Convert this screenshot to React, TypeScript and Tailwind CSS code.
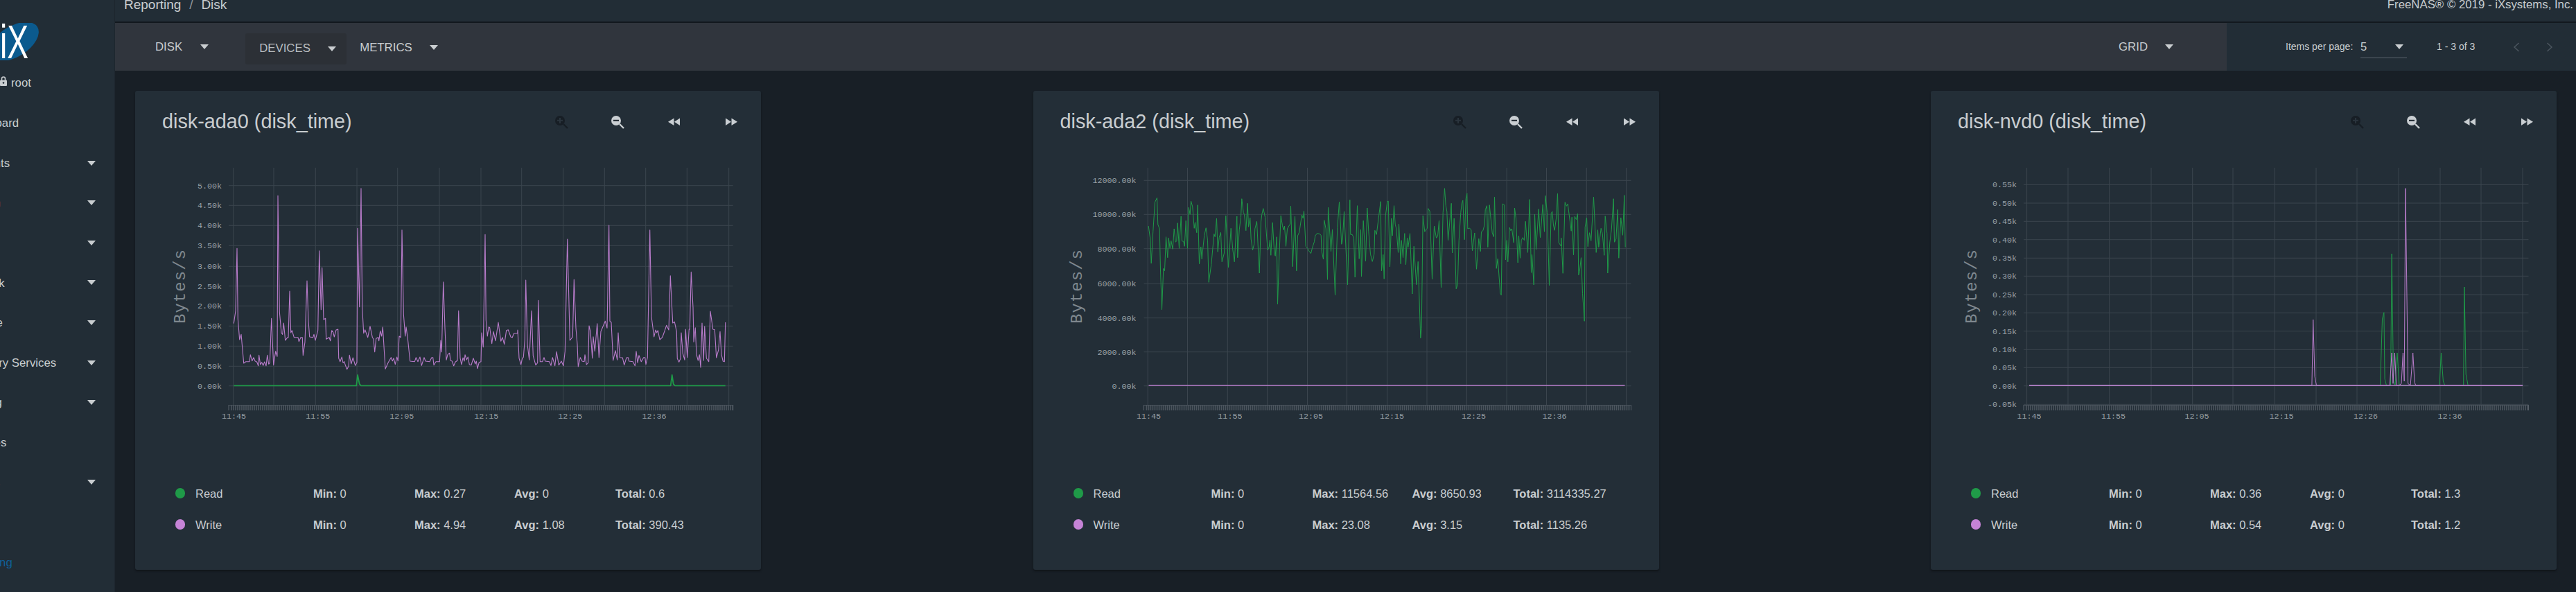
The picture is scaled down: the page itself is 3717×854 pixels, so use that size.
import React from "react";

const parse = (s: string, ox: number, oy: number, sx = 3, sy = 3) =>
  s
    .trim()
    .split(/\s+/)
    .map((p) => {
      const [x, y] = p.split(",").map(Number);
      return `${(ox + x / sx).toFixed(1)},${(oy + y / sy).toFixed(1)}`;
    })
    .join(" ");

const purple1 =
  parse(
    "322,710 330,655 336,385 340,690 347,780 354,757 365,882 374,875 390,875 394,845 401,872 408,857 414,872 422,877 428,893 431,847 437,888 443,878 449,892 455,876 462,893 467,847 473,886 478,880 485,688 494,890 503,830 510,853 513,157 520,660 528,750 533,757 538,708 545,783 555,770 558,770 564,570 569,750 574,740 583,770 600,770 604,788 612,770 619,770 622,848 630,790 639,525 645,700 650,768 665,770 669,757 675,783 686,740 692,395 700,650 704,468 711,693 719,688 722,778 735,770 740,785 746,740 752,748 757,768 765,738 773,735 776,860 782,875 790,855 795,880 800,875 805,890 812,908 819,895 823,847 830,885 838,858 848,892 855,878 858,298 866,638 873,125 878,640 884,752 890,737 902,770 912,722 922,770 927,778 932,833 938,775 947,770 950,785 956,742 962,765 967,725 978,907 990,880 1003,857 1009,872 1014,860 1021,887 1028,855 1033,872 1038,765 1045,770 1050,305 1057,670 1064,765 1068,725 1075,775 1085,873 1105,875 1111,857 1119,875 1128,855 1135,892 1146,857 1152,873 1170,875 1178,858 1184,857 1188,890 1197,875 1213,875 1218,783 1222,833 1229,530 1236,730 1242,868 1248,845 1256,838 1260,870 1267,873 1274,893 1281,877 1290,870 1295,655 1302,860 1308,888 1314,858 1320,873 1323,845 1330,867 1336,855 1342,888 1350,890",
    230,
    230
  ) +
  " " +
  parse(
    "99,860 107,885 112,873 117,905 124,878 132,875 135,750 142,812 150,325 154,695 160,765 166,725 170,728 179,797 186,745 195,785 207,705 218,787 225,770 233,800 242,740 250,737 261,768 268,770 274,754 290,752 291,738 297,860 305,888 311,860 316,856 322,780 326,522 333,800 341,868 351,655 358,850 369,890 377,880 380,610 388,875 398,875 405,857 410,873 428,875 435,892 442,857 452,893 459,832 469,890 480,873 489,893 496,830 506,345 517,783 529,768 535,520 543,730 549,800 553,897 562,857 570,873 579,875 582,845 589,888 596,880 600,720 606,745 614,860 618,767 625,830 635,710 643,857 651,745 670,700 678,730 686,285 690,700 696,705 704,870 714,827 722,868 726,750 733,857 745,858 752,890 762,858 769,857 773,873 790,875 799,893 804,830 810,880 816,848 826,875 836,857 842,857 846,887 853,857 863,305 870,680 881,768 888,738 893,750 898,740 906,780 917,770 928,740 935,718 945,738 952,503 962,708 970,703 979,745 982,862 989,877 996,862 999,750 1006,840 1014,868 1018,735 1025,857 1033,735 1036,735 1042,487 1050,640 1053,790 1060,728 1065,845 1072,870 1078,845 1083,900 1089,708 1096,870 1100,722 1108,860 1118,875 1125,657 1136,735 1144,737 1151,858 1160,825 1167,745 1173,845 1180,873 1186,875 1190,705",
    650,
    230
  );

const green1 =
  "337.3,556.3 " +
  parse("853,979 858,933 866,972 873,979", 230, 230) +
  " " +
  parse("953,979 959,933 965,972 972,979 1190,979", 650, 230);

const green2 =
  parse(
    "20,228 28,285 32,390 40,250 48,125 57,106 61,222 68,240 72,420 78,590 85,412 90,422 96,275 103,365 107,280 113,325 118,292 125,328 131,240 137,298 142,293 146,215 153,325 161,186 165,293 172,295 176,316 182,205 189,325 194,148 200,178 204,120 211,145 218,238 222,212 229,257 233,137 240,392 247,318 251,371 262,268 269,236 276,290 281,472 292,395 304,262 308,275 315,195 320,340 326,278 333,256 338,383 348,345 355,183 366,407 377,238 385,330 392,383 403,186 406,365 413,245 420,190 424,110 431,170 435,178 442,248 449,130 453,232 460,193 464,285 471,332 478,305 481,240 489,208 500,432 507,210 511,178 517,152 525,190 536,332 542,320 546,288 550,355 557,213 565,345 569,358 575,275 579,566 586,360 593,183 600,227 605,245 609,228 615,316 621,240 628,228 633,220 636,142 644,404 654,186 661,422 666,270 673,255 684,180 689,195 693,163 701,316 709,325 717,340 723,347 730,320 738,296 742,270 750,260 760,262 767,268 770,338 777,372 781,203 788,240 795,460 798,148 810,338 816,243 828,527 838,235 846,124 856,307 860,290 867,165 882,482 892,115 895,265 902,265 909,280 914,450 924,140 932,370 939,243 942,447 950,205 960,380 967,150 973,250 981,350 989,382 997,350 1000,247 1007,265 1025,122 1029,422 1036,352 1040,457 1046,185 1054,122 1058,120 1065,405 1072,195 1076,270",
    1650,
    250
  ) +
  " " +
  parse(
    "33,140 38,220 43,240 51,343 54,220 62,392 65,290 72,365 79,260 84,395 90,280 94,320 102,260 112,522 119,316 130,482 137,382 148,713 152,670 158,183 166,253 172,243 177,238 181,152 188,165 198,458 207,228 216,280 222,272 228,205 237,494 245,170 252,65 257,140 262,165 267,290 281,130 285,345 293,195 302,500 308,483 314,290 322,170 326,132 331,117 338,287 344,110 349,87 352,240 360,237 367,245 372,335 382,258 390,415 400,283 407,338 411,253 418,248 425,222 428,158 435,140 439,320 446,137 458,258 465,275 468,103 476,412 482,370 493,518 497,527 503,132 511,137 516,375 521,290 526,383 533,235 538,248 543,240 551,300 555,150 561,198 569,387 573,270 579,367 584,290 590,278 597,290 602,208 612,343 620,113 627,430 630,352 638,483 642,177 648,330 659,155 666,278 677,135 684,253 688,97 696,170 705,485 713,173 718,165 723,225 728,247 735,195 741,88 746,300 756,315 757,280 764,433 773,125 780,142 785,133 800,250 803,190 810,353 815,187 822,200 828,175 832,440 836,425 843,365 849,520 857,640 860,233 867,192 872,317 879,257 886,292 897,103 908,343 915,245 919,320 929,238 935,260 943,355 947,185 955,260 958,432 967,300 974,245 983,110 987,298 994,285 1001,157 1006,367 1015,192 1023,268 1030,95 1034,320",
    2000,
    250
  );

const green3 = parse(
  "248,1308 1095,1308 1100,1020 1104,992 1106,1280 1110,1308 1120,1308 1123,738 1127,1290 1131,1308 1136,1167 1141,1308 1238,1308 1242,1167 1247,1290 1251,1308 1296,1308 1298,882 1302,1260 1307,1308 1439,1308",
  2780,
  120,
  1.673
);
const purple3 = parse(
  "248,1308 930,1308 933,1023 937,1270 941,1308 1118,1308 1123,1167 1126,1300 1130,1167 1134,1308 1140,1308 1146,1300 1150,1167 1153,1290 1156,455 1162,1300 1168,1308 1174,1167 1178,1295 1181,1308 1439,1308",
  2780,
  120,
  1.673
);

type Series = { points: string; color: string; width: number };
type ChartDef = {
  title: string;
  cardX: number;
  left: number;
  right: number;
  labelEnd: number;
  axisX: number;
  ys: [string, number][];
  vs: number[];
  xs: [string, number][];
  series: Series[];
  rows: [string, string, string, string, string, string][];
};

const G = "#1f9a48";
const P = "#b97ccb";

const charts: ChartDef[] = [
  {
    title: "disk-ada0 (disk_time)",
    cardX: 195,
    left: 330,
    right: 1057.7,
    labelEnd: 320,
    axisX: 267,
    ys: [
      ["5.00k", 267.7],
      ["4.50k", 296.3],
      ["4.00k", 325.3],
      ["3.50k", 354.3],
      ["3.00k", 384.3],
      ["2.50k", 412.7],
      ["2.00k", 441.3],
      ["1.50k", 470.3],
      ["1.00k", 499.3],
      ["0.50k", 528.3],
      ["0.00k", 556.7],
    ],
    vs: [336.7, 395, 455.3, 515, 573.7, 634, 694, 752.7, 812.7, 872.3, 931.7, 991.3, 1051.7],
    xs: [
      ["11:45", 337.5],
      ["11:55", 458.7],
      ["12:05", 579.7],
      ["12:15", 701.7],
      ["12:25", 822.7],
      ["12:36", 944],
    ],
    series: [
      { points: purple1, color: P, width: 1.1 },
      { points: green1, color: G, width: 1.8 },
    ],
    rows: [
      ["Read", G, "0", "0.27", "0", "0.6"],
      ["Write", "#c583d6", "0", "4.94", "1.08", "390.43"],
    ],
  },
  {
    title: "disk-ada2 (disk_time)",
    cardX: 1490.5,
    left: 1650,
    right: 2353,
    labelEnd: 1639,
    axisX: 1560,
    ys: [
      ["12000.00k", 260.3],
      ["10000.00k", 309.3],
      ["8000.00k", 358.7],
      ["6000.00k", 409.3],
      ["4000.00k", 458.7],
      ["2000.00k", 507.7],
      ["0.00k", 556.7],
    ],
    vs: [1655.7, 1713, 1770.8, 1828, 1886, 1943, 2001, 2058.5, 2116, 2173.6, 2231, 2288.8, 2346],
    xs: [
      ["11:45", 1657],
      ["11:55", 1774.4],
      ["12:05", 1891],
      ["12:15", 2008],
      ["12:25", 2126],
      ["12:36", 2242.6],
    ],
    series: [
      { points: green2, color: G, width: 1 },
      { points: "1657,556 2344,556", color: P, width: 1.6 },
    ],
    rows: [
      ["Read", G, "0", "11564.56", "8650.93", "3114335.27"],
      ["Write", "#c583d6", "0", "23.08", "3.15", "1135.26"],
    ],
  },
  {
    title: "disk-nvd0 (disk_time)",
    cardX: 2786,
    left: 2920,
    right: 3648.5,
    labelEnd: 2910,
    axisX: 2852,
    ys: [
      ["0.55k", 266.3],
      ["0.50k", 293],
      ["0.45k", 319.3],
      ["0.40k", 345.7],
      ["0.35k", 372.3],
      ["0.30k", 398.3],
      ["0.25k", 425],
      ["0.20k", 451.3],
      ["0.15k", 477.7],
      ["0.10k", 504.3],
      ["0.05k", 530.3],
      ["0.00k", 556.7],
      ["-0.05k", 583.3],
    ],
    vs: [2924.6, 2984, 3043.6, 3104, 3163.7, 3222, 3282, 3342, 3401, 3461, 3521, 3580, 3640],
    xs: [
      ["11:45", 2928],
      ["11:55", 3049.6],
      ["12:05", 3170],
      ["12:15", 3292],
      ["12:26", 3413.6],
      ["12:36", 3535],
    ],
    series: [
      { points: green3, color: G, width: 1 },
      { points: purple3, color: P, width: 1 },
      { points: "2928,556 3640,556", color: P, width: 1.6 },
    ],
    rows: [
      ["Read", G, "0", "0.36", "0", "1.3"],
      ["Write", "#c583d6", "0", "0.54", "0", "1.2"],
    ],
  },
];

function Caret({ className = "" }: { className?: string }) {
  return (
    <svg width="12" height="7" viewBox="0 0 12 7" className={`shrink-0 ${className}`}>
      <path d="M0 0 H12 L6 7 Z" fill="#c9cdd0" />
    </svg>
  );
}

function Magnifier({ plus }: { plus: boolean }) {
  const c = plus ? "#171e25" : "#c9ced2";
  const inner = plus ? "#2a343d" : "#1d262e";
  return (
    <svg width="20" height="20" viewBox="0 0 20 20">
      <circle cx="8" cy="8" r="7" fill={c} />
      <path d="M13 13 L19 19" stroke={c} strokeWidth="2.4" />
      <path d="M4 7.8 H12" stroke={inner} strokeWidth="2" />
      {plus && <path d="M8 4 V12" stroke={inner} strokeWidth="2" />}
    </svg>
  );
}

function Skip({ back }: { back: boolean }) {
  return (
    <svg width="20" height="20" viewBox="0 0 20 20">
      <g fill="#c9ced2" transform={back ? "" : "translate(20 0) scale(-1 1)"}>
        <path d="M9.5 4.5 V15 L1 9.8 Z" />
        <path d="M18 4.5 V15 L10 9.8 Z" />
      </g>
    </svg>
  );
}

function Chart({ def }: { def: ChartDef }) {
  const ticks: number[] = [];
  for (let x = def.left + 4; x < def.right; x += 3) ticks.push(x);
  return (
    <svg
      viewBox={`${def.cardX} 221 903 400`}
      className="block w-[903px] h-[400px]"
      style={{ fontFamily: '"Liberation Mono", monospace' }}
    >
      {def.ys.map(([label, y]) => (
        <g key={label}>
          <line x1={def.left} x2={def.right} y1={y} y2={y} stroke="#3b454e" strokeWidth="1" />
          <text x={def.labelEnd} y={y + 4} textAnchor="end" fontSize="11.7" fill="#98a0a6">
            {label}
          </text>
        </g>
      ))}
      {def.vs.map((x) => (
        <line key={x} x1={x} x2={x} y1={242} y2={584} stroke="#3b454e" strokeWidth="1" />
      ))}
      <line x1={def.left} x2={def.left} y1={584} y2={592} stroke="#58616a" />
      <line x1={def.right} x2={def.right} y1={584} y2={592} stroke="#58616a" />
      <line x1={def.left} x2={def.right} y1={584.5} y2={584.5} stroke="#4c555e" />
      {ticks.map((x) => (
        <line key={x} x1={x} x2={x} y1={585} y2={592} stroke="#4c555e" strokeWidth="1.6" />
      ))}
      {def.xs.map(([label, x]) => (
        <text key={label} x={x} y={604} textAnchor="middle" fontSize="11.7" fill="#98a0a6">
          {label}
        </text>
      ))}
      <text
        transform={`translate(${def.axisX} 467) rotate(-90)`}
        fontSize="24"
        fill="#7f888f"
        textLength="107"
        lengthAdjust="spacing"
      >
        Bytes/s
      </text>
      {def.series.map((s, i) => (
        <polyline
          key={i}
          points={s.points}
          fill="none"
          stroke={s.color}
          strokeWidth={s.width}
          strokeLinejoin="round"
        />
      ))}
    </svg>
  );
}

function Card({ def }: { def: ChartDef }) {
  return (
    <div className="w-[903px] h-[691px] shrink-0 rounded-[3px] bg-[#232e37] shadow-[0_2px_3px_rgba(0,0,0,0.35)] flex flex-col">
      <div className="h-[90px] flex items-center pl-[39px] pr-[33px]">
        <div className="text-[28.8px] text-[#c9cdd0] whitespace-nowrap">{def.title}</div>
        <div className="ml-auto flex items-center">
          <Magnifier plus />
          <div className="ml-[61px]">
            <Magnifier plus={false} />
          </div>
          <div className="ml-[62px]">
            <Skip back />
          </div>
          <div className="ml-[62px]">
            <Skip back={false} />
          </div>
        </div>
      </div>
      <Chart def={def} />
      <div className="mt-[69px] pl-[58px] text-[16.5px] text-[#c9cdd0]">
        {def.rows.map(([name, color, min, max, avg, total]) => (
          <div key={name} className="h-[45px] grid grid-cols-[199px_146px_144px_146px_1fr] items-center">
            <div className="flex items-center">
              <span className="w-[14px] h-[15px] rounded-full mr-[15px] -mt-[3px]" style={{ background: color }} />
              <span>{name}</span>
            </div>
            <div>
              <b>Min:</b> {min}
            </div>
            <div>
              <b>Max:</b> {max}
            </div>
            <div>
              <b>Avg:</b> {avg}
            </div>
            <div>
              <b>Total:</b> {total}
            </div>
          </div>
        ))}
      </div>
    </div>
  );
}

const nav: { label: string; caret?: boolean; cls?: string }[] = [
  { label: "Dashboard" },
  { label: "Accounts", caret: true },
  { label: "System", caret: true, cls: "text-[#b5562a]" },
  { label: "Tasks", caret: true },
  { label: "Network", caret: true },
  { label: "Storage", caret: true },
  { label: "Directory Services", caret: true },
  { label: "Sharing", caret: true },
  { label: "Services" },
  { label: "Plugins", caret: true },
  { label: "Jails" },
  { label: "Reporting", cls: "text-[#0f5f96]" },
];

function Sidebar() {
  return (
    <aside className="w-[166px] shrink-0 h-full bg-[#222d36] overflow-hidden text-[16.8px] text-[#c9cdd0] border-r border-[#1d262e]">
      <div className="h-[96px] pt-[33px]">
        <svg width="60" height="54" viewBox="0 33 60 54" className="block">
          <ellipse cx="20" cy="60" rx="40" ry="22" transform="rotate(-32 20 60)" fill="#0b5a8e" />
          <text
            transform="translate(0 84) scale(0.68 1)"
            fontSize="68"
            fill="#ffffff"
            style={{ fontFamily: '"Liberation Sans", sans-serif' }}
          >
            iX
          </text>
        </svg>
      </div>
      <div className="h-[48px] flex items-center">
        <svg width="10" height="16" viewBox="0 0 10 16" className="block shrink-0 -mt-[6px]">
          <path d="M2.5 7 V4.5 a2.5 2.5 0 0 1 5 0 V7" fill="none" stroke="#c9cdd0" strokeWidth="1.6" />
          <rect x="0" y="6.5" width="10" height="8.5" rx="1" fill="#c9cdd0" />
          <circle cx="5" cy="10.5" r="1.3" fill="#222d36" />
        </svg>
        <span className="ml-[6px]">root</span>
      </div>
      <div className="pt-[5px]">
        {nav.map((n) => (
          <div key={n.label} className="h-[57.6px] relative flex items-center">
            <span className={`whitespace-nowrap ml-[-55px] ${n.cls ?? ""}`}>{n.label}</span>
            {n.caret && <Caret className="absolute left-[126px] top-[25px]" />}
          </div>
        ))}
      </div>
    </aside>
  );
}

function Toolbar() {
  return (
    <div className="h-[69px] flex text-[#c9cdd0] shrink-0">
      <div className="w-[3047px] bg-[#30353d] flex items-center text-[16.8px] pl-[58px] pr-[77px]">
        <span>DISK</span>
        <Caret className="ml-[26px]" />
        <div className="ml-[53px] w-[146px] h-[45px] mt-[5px] rounded-[3px] bg-[#2c3036] flex items-center pl-[20px]">
          <span className="text-[#b9bdc0]">DEVICES</span>
          <Caret className="ml-[25px]" />
        </div>
        <div className="ml-[19px] flex items-center mt-[2px]">
          <span>METRICS</span>
          <Caret className="ml-[25px]" />
        </div>
        <div className="ml-auto flex items-center">
          <span>GRID</span>
          <Caret className="ml-[25px]" />
        </div>
      </div>
      <div className="flex-1 bg-[#222d36] flex items-center pl-[85px] text-[14px]">
        <span className="w-[108px]">Items per page:</span>
        <div className="relative w-[67px] h-[50px] flex items-center text-[16.5px]">
          <span>5</span>
          <Caret className="absolute left-[50px] top-[21px]" />
          <div className="absolute left-0 right-0 bottom-[9px] h-px bg-[#5c656d]" />
        </div>
        <span className="ml-[43px]">1 - 3 of 3</span>
        <svg width="10" height="14" viewBox="0 0 10 14" className="ml-[55px]">
          <path d="M8.5 1 L2 7 L8.5 13" fill="none" stroke="#4d5760" strokeWidth="1.4" />
        </svg>
        <svg width="10" height="14" viewBox="0 0 10 14" className="ml-[38px]">
          <path d="M1.5 1 L8 7 L1.5 13" fill="none" stroke="#4d5760" strokeWidth="1.4" />
        </svg>
      </div>
    </div>
  );
}

export default function App() {
  return (
    <div
      className="w-[3717px] h-[854px] flex overflow-hidden bg-[#181f26]"
      style={{ fontFamily: '"Liberation Sans", Arial, sans-serif' }}
    >
      <Sidebar />
      <main className="flex-1 flex flex-col min-w-0">
        <header className="h-[33px] shrink-0 bg-[#222d36] border-b-2 border-[#12181e] flex justify-between text-[#c9cdd0]">
          <div className="text-[19px] leading-[14px] pl-[13px] whitespace-nowrap flex">
            <span>Reporting</span>
            <span className="w-[29px] text-center text-[#8e959b]">/</span>
            <span>Disk</span>
          </div>
          <div className="text-[16.8px] leading-[14px] pr-[4px]">FreeNAS® © 2019 - iXsystems, Inc.</div>
        </header>
        <Toolbar />
        <div className="flex justify-between pl-[29px] pr-[28px] pt-[29px]">
          {charts.map((c) => (
            <Card key={c.title} def={c} />
          ))}
        </div>
      </main>
    </div>
  );
}
